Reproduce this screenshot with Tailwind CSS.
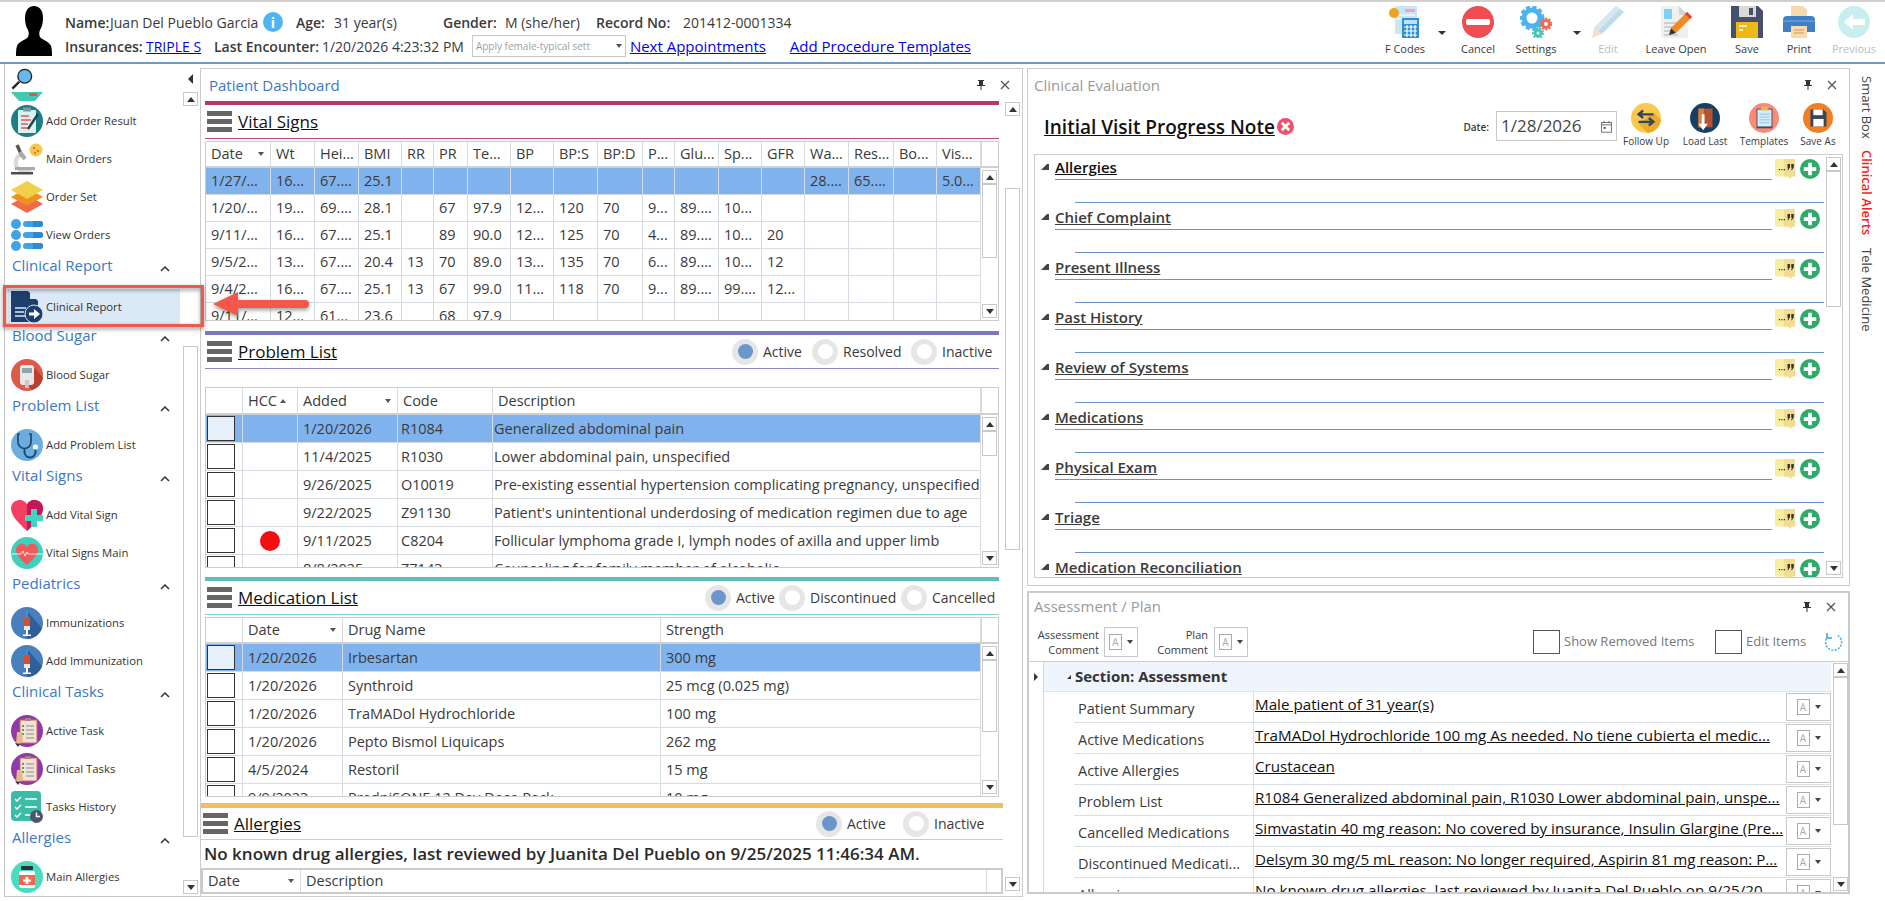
<!DOCTYPE html>
<html lang="en">
<head>
<meta charset="UTF-8" />
<title>Clinical Evaluation</title>
<script src="https://cdn.jsdelivr.net/npm/@tailwindcss/browser@4"></script>
</head>
<body class="relative w-[1885px] h-[901px] overflow-hidden bg-white text-[14px] text-[#3a3a3a] font-['Open_Sans',sans-serif]">

<header class="h-[64px] border-t-2 border-b-2 border-t-[#d0d0d0] border-b-[#7098c8] flex">
  <svg class="ml-[16px] mt-[4px] w-[36px] h-[50px] shrink-0" viewBox="0 0 36 50"><path fill="#000" d="M18 0c6 0 9 5 9 12 0 5-1 9-3 12-1 2-1 5 0 7 2 3 9 4 11 9 1 3 1 6 1 10H0c0-4 0-7 1-10 2-5 9-6 11-9 1-2 1-5 0-7-2-3-3-7-3-12C9 5 12 0 18 0z"/></svg>
  <div class="ml-[13px] w-[906px] shrink-0">
    <div class="flex items-center h-[24px] mt-[8px] whitespace-nowrap">
      <span class="w-[45px] font-semibold">Name:</span><span class="w-[153px]">Juan Del Pueblo Garcia</span>
      <span class="w-[33px]"><span class="flex items-center justify-center w-[20px] h-[20px] rounded-full bg-[#4db6f0] text-white font-bold text-[14px]">i</span></span>
      <span class="w-[38px] font-semibold">Age:</span><span class="w-[109px]">31 year(s)</span>
      <span class="w-[62px] font-semibold">Gender:</span><span class="w-[91px]">M (she/her)</span>
      <span class="w-[87px] font-semibold">Record No:</span><span>201412-0001334</span>
    </div>
    <div class="flex items-center h-[24px] whitespace-nowrap">
      <span class="w-[81px] font-semibold">Insurances:</span><a class="w-[68px] text-[#0000ee] underline">TRIPLE S</a>
      <span class="w-[108px] font-semibold">Last Encounter:</span><span class="w-[150px]">1/20/2026 4:23:32 PM</span>
      <span class="w-[154px] h-[22px] flex items-center border border-[#c8c8c8] pl-[3px] text-[10px] text-[#a0a0a0] overflow-hidden">Apply female-typical sett<span class="ml-auto mr-[3px] border-x-[3px] border-x-transparent border-t-[4px] border-t-[#555]"></span></span>
      <a class="ml-[4px] w-[160px] text-[#0000ee] underline text-[15px]">Next Appointments</a>
      <a class="text-[#0000ee] underline text-[15px]">Add Procedure Templates</a>
    </div>
  </div>
  <div id="toolbar" class="ml-auto mr-[6px] flex"></div>
</header>

<main class="flex h-[835px]">
  <aside class="ml-[4px] w-[196px] h-[833px] border-l border-b border-[#c8c8c8] flex shrink-0">
    <div id="sidebar" class="w-[178px] h-full overflow-hidden"></div>
    <div class="w-[17px] flex flex-col items-start">
      <div class="h-[28px] pl-[5px] pt-[10px]"><span class="block border-y-[5px] border-y-transparent border-r-[5px] border-r-[#333]"></span></div>
      <div id="sideUp"></div>
      <div class="mt-[240px] w-[15px] h-[491px] border border-[#c8c8c8]"></div>
      <div id="sideDown" class="mt-[43px]"></div>
    </div>
  </aside>

  <section class="mt-[4px] w-[823px] h-[829px] border border-[#cccccc] shrink-0 overflow-hidden">
    <div id="midTitle" class="h-[32px] flex items-center pl-[8px] text-[15px] text-[#3b78c4]">Patient Dashboard</div>
    <div class="flex">
      <div class="w-[804px] shrink-0">
        <div id="vitals"></div>
        <div id="problems" class="mt-[10px]"></div>
        <div id="meds" class="mt-[9px]"></div>
        <div id="allergies" class="mt-[6px]"></div>
      </div>
      <div class="w-[15px] flex flex-col">
        <div id="midUp" class="mt-[1px]"></div>
        <div class="mt-[72px] w-[15px] h-[362px] border border-[#c8c8c8]"></div>
        <div id="midDown" class="mt-[327px]"></div>
      </div>
    </div>
  </section>

  <div class="ml-[4px] w-[823px] shrink-0 mt-[4px] flex flex-col">
    <section class="h-[518px] border border-[#cccccc] px-[6px] overflow-hidden">
      <div class="flex items-center h-[32px] text-[15px] text-[#9a9a9a]">Clinical Evaluation<span id="cePin" class="ml-auto mr-[6px] flex"></span></div>
      <div class="flex h-[53px] items-start">
        <span class="ml-[10px] mt-[13px] text-[19px] leading-[26px] font-semibold text-[#111] underline">Initial Visit Progress Note</span>
        <span id="xIcon" class="ml-[2px] mt-[17px]"></span>
        <span class="ml-auto mt-[19px] text-[10px] font-semibold">Date:</span>
        <div class="ml-[7px] mt-[10px] w-[121px] h-[30px] border border-[#c8c8c8] flex items-center pl-[4px] text-[17px] text-[#444]">1/28/2026<span id="calIcon" class="ml-auto mr-[3px] flex"></span></div>
        <div id="ceTools" class="flex mt-[2px]"></div>
      </div>
      <div class="h-[424px] border border-[#cccccc] flex overflow-hidden">
        <div id="sections" class="w-[791px] shrink-0"></div>
        <div id="ceBar" class="h-full"></div>
      </div>
    </section>

    <section class="mt-[5px] h-[303px] border-2 border-[#cccccc] overflow-hidden">
      <div class="flex items-center h-[30px] pl-[5px] pb-[3px] text-[15px] text-[#9a9a9a]">Assessment / Plan<span id="apPin" class="ml-auto mr-[12px] flex"></span></div>
      <div class="flex h-[38px] items-center">
        <span class="w-[70px] text-right leading-[15px] text-[11px]">Assessment<br>Comment</span>
        <span id="combo1" class="ml-[5px]"></span>
        <span class="w-[70px] text-right leading-[15px] text-[11px]">Plan<br>Comment</span>
        <span id="combo2" class="ml-[6px]"></span>
        <span class="ml-[285px] w-[27px] h-[24px] border border-[#555]"></span>
        <span class="ml-[4px] w-[151px] text-[13px] text-[#777]">Show Removed Items</span>
        <span class="w-[27px] h-[24px] border border-[#555]"></span>
        <span class="ml-[4px] w-[78px] text-[13px] text-[#777]">Edit Items</span>
        <svg class="w-[20px] h-[20px]" viewBox="0 0 20 20" fill="none" stroke="#36a3e8" stroke-width="1.4"><path stroke-dasharray="2 1.4" d="M14 3.5A8 8 0 1 1 3.5 5"/><path stroke-width="1.6" d="M3 1 3 6 8 6"/></svg>
      </div>
      <div class="border-t border-[#cccccc] h-[231px] flex">
        <div class="w-[15px] shrink-0 border-r border-[#d8d8d8] pt-[11px] pl-[5px]"><span class="block border-y-[4px] border-y-transparent border-l-[4px] border-l-[#333]"></span></div>
        <div id="apRows" class="w-[787px] shrink-0 overflow-hidden"></div>
        <div id="apBar" class="pl-[2px] pt-[1px]"></div>
      </div>
    </section>
  </div>

  <div class="w-[35px] shrink-0 flex flex-col items-center pt-[12px] pr-[3px] text-[13px] text-[#444]">
    <span class="h-[62px] [writing-mode:vertical-rl] whitespace-nowrap">Smart Box</span>
    <span class="mt-[12px] h-[86px] [writing-mode:vertical-rl] whitespace-nowrap font-semibold text-[#f01e1e]">Clinical Alerts</span>
    <span class="mt-[12px] h-[84px] [writing-mode:vertical-rl] whitespace-nowrap">Tele Medicine</span>
  </div>
</main>

<!-- callout drawn on top of the screenshot -->
<div class="absolute left-[3px] top-[285px] w-[201px] h-[42px] border-[3px] border-[#f4584a] drop-shadow-[0_2px_2px_rgba(0,0,0,0.45)]"></div>
<svg class="absolute left-[208px] top-[288px] w-[104px] h-[32px] drop-shadow-[0_2px_2px_rgba(0,0,0,0.4)]" viewBox="0 0 104 32"><path fill="#f4584a" d="M5 16 30 4v8h67a4 4 0 0 1 0 8H30v8z"/></svg>

<script>
const up = `<span class="block border-x-[4px] border-x-transparent border-b-[5px] border-b-[#333]"></span>`
const down = `<span class="block border-x-[4px] border-x-transparent border-t-[5px] border-t-[#333]"></span>`
const sbBtn = (a) => `<div class="w-[15px] h-[14px] border border-[#c8c8c8] bg-white flex items-center justify-center">${a}</div>`
const pin = `<svg class="w-[8px] h-[10px]" viewBox="0 0 8 10"><path fill="#333" d="M1 0h6v1H6v4h2v1H4.5v4h-1V6H0V5h2V1H1z"/></svg>`
const close = `<svg class="ml-[15px] w-[10px] h-[10px]" viewBox="0 0 10 10" stroke="#555" stroke-width="1.3"><path d="M1 1l8 8M9 1l-8 8"/></svg>`
const pins = `<span class="flex items-center">${pin}${close}</span>`

const svg = (w, body) => `<svg class="block" width="${w}" height="${w}" viewBox="0 0 32 32">${body}</svg>`

const icons = {
  orderResult: `<circle cx="16" cy="16" r="16" fill="#1d7f85"/><rect x="7" y="5" width="18" height="23" rx="1" fill="#d9f2ec"/><rect x="12" y="2.5" width="8" height="4" fill="#7c9aa0"/><path d="M10 11h8M10 15h10M10 19h7M10 23h9" stroke="#e0566c" stroke-width="1.4"/><path d="M27 9 17 24" stroke="#24424f" stroke-width="2.4"/>`,
  mainOrders: `<path d="M9 12a9 9 0 1 0 12 13" fill="none" stroke="#d8d8d8" stroke-width="4"/><path d="M6 2l5 11" stroke="#555" stroke-width="3.4"/><path d="M9 9l5 7" stroke="#aaa" stroke-width="4"/><rect x="4" y="24" width="20" height="3" fill="#aaa"/><rect y="29" width="22" height="2.5" fill="#4c4c4c"/><circle cx="25" cy="7" r="6.5" fill="#f5c84c"/><circle cx="23" cy="5" r="1" fill="#d8562e"/><circle cx="27" cy="8" r="1" fill="#d8562e"/><circle cx="24" cy="10" r=".9" fill="#d8562e"/>`,
  orderSet: `<path fill="#ee6a4a" d="M16 14l16 9-16 9-16-9z"/><path fill="#f0901e" d="M16 7l16 9-16 9-16-9z"/><path fill="#f0cf4a" d="M16 0l16 9-16 9L0 9z"/>`,
  viewOrders: `<g fill="#3fa3e8"><circle cx="5" cy="5" r="5"/><circle cx="5" cy="16" r="5"/><circle cx="5" cy="27" r="5"/><rect x="12" y="2" width="20" height="6" rx="3"/><rect x="12" y="13" width="20" height="6" rx="3"/><rect x="12" y="24" width="20" height="6" rx="3"/></g><g fill="#2f88d4"><path d="M22 2h7a3 3 0 0 1 0 6h-7zM22 13h7a3 3 0 0 1 0 6h-7zM22 24h7a3 3 0 0 1 0 6h-7z"/></g>`,
  clinicalReport: `<path fill="#1c3f6e" d="M0 0h17l10 10v21H0z"/><path fill="#dbe8f6" d="M19 0l8 8h-8z"/><path stroke="#dbe8f6" stroke-width="1.4" d="M4 17h11M4 21h9M4 25h10"/><circle cx="23" cy="23" r="9" fill="#1c3f6e" stroke="#dbe8f6"/><path fill="#fff" d="M18 21.500h5V18l6 5-6 5v-3.500h-5z"/>`,
  bloodSugar: `<circle cx="16" cy="16" r="16" fill="#dd5a48"/><path fill="#b9402f" d="M24 9l8 10a16 16 0 0 1-11 12l-6-6z"/><rect x="9" y="6" width="14" height="20" rx="3" fill="#e8e8e8"/><rect x="11" y="9" width="10" height="5" fill="#8fa6ad"/><rect x="14" y="21" width="4" height="8" fill="#c9c9c9"/>`,
  problem: `<circle cx="16" cy="16" r="16" fill="#6aaee0"/><path d="M9 5H7v8a6.500 6.500 0 0 0 13 0V5h-2" fill="none" stroke="#24476b" stroke-width="1.7"/><path d="M13.500 20v3a5.500 5.500 0 0 0 11 0v-3" fill="none" stroke="#24476b" stroke-width="2"/><circle cx="24.500" cy="18" r="2.600" fill="#fff"/>`,
  addVital: `<path fill="#f43f62" d="M16 32C4 21 0 15 0 9a8.500 8.500 0 0 1 16-3.500A8.500 8.500 0 0 1 32 9c0 6-4 12-16 23z"/><path fill="#c2185b" d="M16 5.500A8.500 8.500 0 0 1 32 9c0 6-4 12-16 23z"/><path fill="#3ed6c0" d="M20 10h6v6h6v6h-6v6h-6v-6h-6v-6h6z"/>`,
  vitalMain: `<circle cx="16" cy="16" r="16" fill="#3fd0c0"/><path fill="#ef5a5a" d="M16 28C8 21 5 17 5 12.500a5.700 5.700 0 0 1 11-2 5.700 5.700 0 0 1 11 2C27 17 24 21 16 28z"/><path d="M0 17h10l2-3 2 5 2-4 1 2h15" fill="none" stroke="#fff" stroke-width=".8"/>`,
  syringe: `<circle cx="16" cy="16" r="16" fill="#4a7fbe"/><path fill="#2f5f96" d="M16 4l15 17a16 16 0 0 1-15 11z"/><rect x="15" y="4" width="2" height="6" fill="#3f92dc"/><rect x="13" y="10" width="6" height="9" fill="#d2502e"/><rect x="13" y="19" width="6" height="4" fill="#e8e8e8"/><rect x="15" y="23" width="2" height="5" fill="#fff"/><rect x="12" y="27.500" width="8" height="1.500" fill="#fff"/>`,
  task: `<circle cx="16" cy="16" r="16" fill="#8e3ba8"/><rect x="9" y="5" width="17" height="23" fill="#f0e4d8" stroke="#d9604a"/><rect x="14" y="3" width="6" height="3" fill="#b08080"/><path d="M15 11h8M15 15h8M15 19h8M15 23h8" stroke="#8a8a8a"/><path d="M11 10h2v2h-2zM11 14h2v2h-2zM11 18h2v2h-2z" fill="#49a070"/><path fill="#e8b88a" d="M6 17h5l1 9-4 3H5z"/><path fill="#333" d="M4 28l5 1-2 3z"/>`,
  tasksHist: `<rect width="30" height="30" rx="4" fill="#3cbba6"/><path d="M4 8l2 2 4-4M4 16l2 2 4-4M4 24l2 2 4-4" fill="none" stroke="#fff" stroke-width="1.4"/><path d="M14 8h12M14 16h12M14 24h6" stroke="#fff" stroke-width="1.4"/><circle cx="25.500" cy="25.500" r="6.500" fill="#4a5570"/><path d="M25.500 21.500v4h3.500" fill="none" stroke="#fff" stroke-width="1.400"/>`,
  allergy: `<circle cx="16" cy="16" r="16" fill="#4bdcc0"/><rect x="10" y="5" width="12" height="4" rx="1" fill="#333"/><rect x="8" y="10" width="16" height="17" rx="2" fill="#fff"/><rect x="8" y="14" width="16" height="10" fill="#f2674f"/><path d="M14.500 16h3v2.500H20v2h-2.500V23h-3v-2.500H12v-2h2.500z" fill="#fff"/>`,
  bowl: `<path fill="#41c9b4" d="M0 0h32L24 9H8z"/><rect x="18" y="1" width="8" height="3" fill="#e0564a"/>`,
  lens: `<circle cx="20" cy="12" r="10" fill="#6ab7ec" stroke="#222" stroke-width="2"/><path d="M12 20 2 30" stroke="#222" stroke-width="3.500"/>`,

  fcodes: `<rect x="6" width="22" height="28" fill="#c9e6f7"/><path d="M16 3h10v3H16z" fill="#f2a3c0"/><path d="M8 9h18M8 13h18" stroke="#fff"/><rect x="13" y="12" width="17" height="20" fill="#2f8fcf"/><rect x="15" y="14" width="13" height="4" fill="#bfe3f6"/><path d="M15 21h13M15 25h13M15 29h13M18 19v12M22 19v12M26 19v12" stroke="#fff" stroke-width="1.200"/><circle cx="5" cy="7" r="5" fill="#f0a020"/>`,
  cancel: `<circle cx="16" cy="16" r="16" fill="#ee4d52"/><rect x="4" y="13" width="24" height="6" rx="2" fill="#fff"/>`,
  settings: `<g fill="none"><circle cx="12" cy="12" r="8" stroke="#4fb3ee" stroke-width="5"/><circle cx="12" cy="12" r="11" stroke="#4fb3ee" stroke-width="3" stroke-dasharray="4 2.500"/><circle cx="26" cy="18" r="3.500" stroke="#ef6a52" stroke-width="3"/><circle cx="26" cy="18" r="5.500" stroke="#ef6a52" stroke-width="2" stroke-dasharray="2 1.500"/><circle cx="18" cy="27" r="3" stroke="#40c9b0" stroke-width="3"/><circle cx="18" cy="27" r="5" stroke="#40c9b0" stroke-width="2" stroke-dasharray="2 1.500"/></g>`,
  edit: `<path fill="#bcdcea" d="M24 0l8 6L10 28 2 22z"/><path fill="#f5ddd5" d="M2 22l8 6-10 4z"/><path fill="#d5e8f0" d="M24 0l4 3L6 25l-4-3z"/>`,
  leaveOpen: `<path fill="#f0f0f0" d="M1 0h18l9 9v23H1z"/><path fill="#d4d4d4" d="M19 0l9 9h-9z"/><rect x="4" y="3" width="8" height="10" fill="#7fd0f5"/><path d="M4 17h14M4 21h11M4 25h9M4 29h14" stroke="#b0b0b0" stroke-width="1.200"/><path fill="#f08a22" d="M27 6l5 5-16 16-5-5z"/><path fill="#d8453a" d="M27 6l5 5-2 2-5-5z"/><path fill="#333" d="M11 22l5 5-7 2z"/>`,
  save: `<path fill="#46506a" d="M0 0h27l5 5v27H0z"/><rect x="8" width="17" height="11" fill="#d9d9d9"/><rect x="18" y="2" width="4" height="7" fill="#46506a"/><rect x="5" y="16" width="22" height="16" fill="#eeb917"/><path d="M8 20h8M8 24h4" stroke="#fff" stroke-width="1.500"/>`,
  print: `<path fill="#f7d9ac" d="M8 0h12l4 4v8H8z"/><path fill="#3f7fc4" d="M4 10h24a4 4 0 0 1 4 4v12H0V14a4 4 0 0 1 4-4z"/><rect x="0" y="14" width="32" height="2" fill="#5d97d6"/><rect x="8" y="20" width="16" height="12" fill="#f7d9ac"/><path d="M11 24h10M11 27h10" stroke="#c9986a"/>`,
  previous: `<circle cx="16" cy="16" r="16" fill="#c9eef0"/><path fill="#fff" d="M6 16l9-8v5h12v6H15v5z"/>`,

  followUp: `<circle cx="16" cy="16" r="16" fill="#f9c84c"/><path fill="#e8ac2c" d="M24 10l8 8a16 16 0 0 1-14 14l-10-10z"/><path d="M9 12h15M13 8l-5 4 5 4M23 20H8M19 16l5 4-5 4" fill="none" stroke="#35465c" stroke-width="2.400"/>`,
  loadLast: `<circle cx="16" cy="16" r="16" fill="#173f63"/><rect x="9" y="6" width="15" height="20" fill="#b5532e"/><rect x="9" y="6" width="6" height="20" fill="#d8803a"/><path d="M14 12v12" stroke="#fff" stroke-width="3"/><path fill="#fff" d="M9 22h10l-5 7z"/>`,
  templates: `<circle cx="16" cy="16" r="16" fill="#f98a76"/><rect x="8" y="6" width="17" height="21" fill="#3a4f66"/><rect x="9" y="7" width="15" height="18" fill="#d4ebf8"/><rect x="13" y="4" width="7" height="4" fill="#f2b94a"/><path d="M11 12h11M11 15h11M11 18h11M11 21h11" stroke="#8fc6e8"/>`,
  saveAs: `<circle cx="16" cy="16" r="16" fill="#ef7f22"/><path fill="#35465c" d="M8 7h14l3 3v15H8z"/><rect x="11" y="7" width="10" height="6" fill="#fff"/><rect x="11" y="17" width="11" height="8" fill="#fff"/>`,
  plus: `<circle cx="16" cy="16" r="16" fill="#2eaa6a"/><path fill="#fff" d="M13 6h6v7h7v6h-7v7h-6v-7H6v-6h7z"/>`,
  redX: `<circle cx="16" cy="16" r="16" fill="#f0506e"/><path stroke="#fff" stroke-width="5" d="M9 9l14 14M23 9L9 23"/>`,
  quote: `<path fill="#f8eea0" d="M0 0h32v28h-6v4l-5-4H0z"/><path fill="#f2dc94" d="M14 0h18v28h-6v4l-5-4h-7z"/><path fill="#333" d="M20 8h4v5l-3 5h-1l1-4h-1zM26 8h4v5l-3 5h-1l1-4h-1z"/><path fill="#333" d="M6 16h2v2H6zM10 16h2v2h-2zM14 16h2v2h-2z"/>`,
  cal: `<rect x="4" y="6" width="24" height="24" fill="none" stroke="#555" stroke-width="2"/><path d="M4 12h24M10 2v6M22 2v6" stroke="#555" stroke-width="2"/><rect x="9" y="17" width="5" height="5" fill="#555"/>`
}

document.getElementById('xIcon').innerHTML = svg(17, icons.redX)
document.getElementById('calIcon').innerHTML = svg(13, icons.cal)
document.getElementById('midTitle').insertAdjacentHTML('beforeend', `<span class="ml-auto mr-[12px] flex">${pins}</span>`)
document.getElementById('cePin').innerHTML = pins
document.getElementById('apPin').innerHTML = pins
document.getElementById('sideUp').innerHTML = sbBtn(up)
document.getElementById('sideDown').innerHTML = sbBtn(down)
document.getElementById('midUp').innerHTML = sbBtn(up)
document.getElementById('midDown').innerHTML = sbBtn(down)

// toolbar
const tools = [
  ['F Codes', 'fcodes', 'w-[60px]', ''],
  [null, null, 'w-[14px]', ''],
  ['Cancel', 'cancel', 'w-[58px]', ''],
  ['Settings', 'settings', 'w-[58px]', ''],
  [null, null, 'w-[24px]', ''],
  ['Edit', 'edit', 'w-[38px]', 'text-[#bdbdbd]'],
  ['Leave Open', 'leaveOpen', 'w-[98px]', ''],
  ['Save', 'save', 'w-[44px]', ''],
  ['Print', 'print', 'w-[60px]', ''],
  ['Previous', 'previous', 'w-[50px]', 'text-[#bdbdbd]'],
]
document.getElementById('toolbar').innerHTML = tools.map(([label, icon, w, color]) => {
  if (!label) return `<div class="${w} flex justify-center pt-[29px]"><span class="block h-0 border-x-[4px] border-x-transparent border-t-[4px] border-t-[#333]"></span></div>`
  return `<div class="${w} flex flex-col items-center pt-[4px] whitespace-nowrap">${svg(32, icons[icon])}<span class="mt-[3px] text-[11px] leading-[15px] ${color}">${label}</span></div>`
}).join('')

// clinical evaluation tools
const ceTools = [['Follow Up', 'followUp', 'w-[58px]'], ['Load Last', 'loadLast', 'w-[60px]'], ['Templates', 'templates', 'w-[58px]'], ['Save As', 'saveAs', 'w-[50px]']]
document.getElementById('ceTools').innerHTML = ceTools.map(([l, i, w]) =>
  `<div class="${w} flex flex-col items-center whitespace-nowrap">${svg(30, icons[i])}<span class="text-[10px] leading-[15px] mt-[1px]">${l}</span></div>`).join('')

// sidebar
const side = [
  ['i', 'Add Order Result', 'orderResult'], ['i', 'Main Orders', 'mainOrders'], ['i', 'Order Set', 'orderSet'], ['i', 'View Orders', 'viewOrders'],
  ['g', 'Clinical Report'], ['s', 'Clinical Report', 'clinicalReport'],
  ['g', 'Blood Sugar'], ['i', 'Blood Sugar', 'bloodSugar'],
  ['g', 'Problem List'], ['i', 'Add Problem List', 'problem'],
  ['g', 'Vital Signs'], ['i', 'Add Vital Sign', 'addVital'], ['i', 'Vital Signs Main', 'vitalMain'],
  ['g', 'Pediatrics'], ['i', 'Immunizations', 'syringe'], ['i', 'Add Immunization', 'syringe'],
  ['g', 'Clinical Tasks'], ['i', 'Active Task', 'task'], ['i', 'Clinical Tasks', 'task'], ['i', 'Tasks History', 'tasksHist'],
  ['g', 'Allergies'], ['i', 'Main Allergies', 'allergy'],
]
const sideTop = `<div class="h-[41px] pl-[6px] pt-[4px] flex flex-col"><svg class="w-[22px] h-[22px]" viewBox="0 0 32 32">${icons.lens}</svg><svg class="mt-[2px] w-[32px] h-[9px]" viewBox="0 0 32 9">${icons.bowl}</svg></div>`
document.getElementById('sidebar').innerHTML = sideTop + side.map(([k, label, icon]) => {
  if (k === 'g') return `<div class="h-[32px] pl-[7px] relative text-[15px] leading-[16px] text-[#3b78c4]">${label}<svg class="absolute left-[155px] top-[9px] w-[10px] h-[6px]" viewBox="0 0 10 6" fill="none" stroke="#333" stroke-width="1.5"><path d="M1 5l4-4 4 4"/></svg></div>`
  const bg = k === 's' ? 'bg-[#dbe8f6] w-[172px] ml-[3px] pl-[3px] h-[36px]' : 'pl-[6px] h-[32px]'
  return `<div class="h-[38px]"><div class="flex items-center ${bg}"><span class="w-[32px] shrink-0">${svg(32, icons[icon])}</span><span class="ml-[3px] text-[11.3px] text-[#333] whitespace-nowrap">${label}</span></div></div>`
}).join('')

// dashboard sections
const burger = `<span class="w-[25px] h-[21px] flex flex-col justify-between shrink-0"><i class="block h-[5px] bg-[#666]"></i><i class="block h-[5px] bg-[#666]"></i><i class="block h-[5px] bg-[#666]"></i></span>`
const radio = (label, on, w) => `<span class="${w} flex items-center"><span class="w-[26px] h-[26px] shrink-0 rounded-full bg-[#e6e6e6] flex items-center justify-center"><span class="w-[15px] h-[15px] rounded-full ${on ? 'bg-[#6b95cb]' : 'bg-white'}"></span></span><span class="ml-[5px]">${label}</span></span>`

function head(bar, line, title, radios, rowH, box, pad) {
  return `<div class="${box} ${bar}"></div>
  <div class="${rowH} ${box} ${pad} flex items-center">${burger}<span class="ml-[6px] text-[17px] text-[#111] underline">${title}</span><span class="ml-auto flex">${radios}</span></div>
  <div class="h-[1px] ${box} ${line}"></div>`
}

const cellBase = 'overflow-hidden whitespace-nowrap flex items-center border-r border-[#d6dbe2]'

function table(opts) {
  const hdr = opts.head.map((h, j) => `<div class="${cellBase} pl-[5px] h-full">${h}</div>`).join('')
  const rows = opts.rows.map((r, i) => {
    const sel = i === 0
    const cells = r.map((c, j) => {
      if (opts.check && j === 0) return `<div class="${cellBase} pl-[1px]"><span class="block w-[28px] h-[25px] border border-[#333] ${sel ? 'bg-[#e6f0fb]' : 'bg-white'}"></span></div>`
      if (c === '@dot') return `<div class="${cellBase} justify-center"><span class="block w-[20px] h-[20px] rounded-full bg-[#f01010]"></span></div>`
      const pad = opts.pads ? opts.pads[j] : 'pl-[5px]'
      return `<div class="${cellBase} ${pad}">${c}</div>`
    }).join('')
    return `<div class="grid ${opts.cols} ${opts.rowH} border-b border-[#d6dbe2] ${sel ? 'bg-[#80b3ee]' : ''}">${cells}</div>`
  }).join('')
  return `<div class="${opts.box} border border-[#cccccc] overflow-hidden flex flex-col text-[14.5px]">
    <div class="flex ${opts.headH} shrink-0 border-b-2 border-[#d0d0d0]"><div class="w-[775px] grid ${opts.cols}">${hdr}</div><div class="border-l border-[#d6dbe2]"></div></div>
    <div class="flex flex-1 min-h-0">
      <div class="w-[775px] overflow-hidden shrink-0">${rows}</div>
      <div class="flex flex-col pl-[1px] pt-[2px] pb-[2px]">${sbBtn(up)}<div class="w-[15px] ${opts.thumb} border border-[#c8c8c8]"></div><div class="flex-1"></div>${sbBtn(down)}</div>
    </div>
  </div>`
}

const sortDown = `<span class="ml-auto mr-[6px] border-x-[3px] border-x-transparent border-t-[4px] border-t-[#555]"></span>`
const sortUp = `<span class="ml-[3px] border-x-[3px] border-x-transparent border-b-[4px] border-b-[#555]"></span>`

document.getElementById('vitals').innerHTML = head('h-[4px] bg-[#b8395f]', 'bg-[#c04a70]', 'Vital Signs', '', 'h-[33px]', 'ml-[4px] w-[794px]', 'pl-[2px]') +
  `<div class="ml-[4px] mt-[2px] w-[794px]">` + table({
    box: 'h-[180px]', headH: 'h-[26px]', rowH: 'h-[27px]', thumb: 'h-[74px]',
    cols: 'grid-cols-[65px_44px_44px_43px_32px_34px_43px_43px_44px_45px_32px_44px_43px_43px_44px_45px_43px_44px]',
    head: [`Date${sortDown}`, 'Wt', 'Hei...', 'BMI', 'RR', 'PR', 'Te...', 'BP', 'BP:S', 'BP:D', 'P...', 'Glu...', 'Sp...', 'GFR', 'Wa...', 'Res...', 'Bo...', 'Vis...'],
    rows: [
      ['1/27/...', '16...', '67....', '25.1', '', '', '', '', '', '', '', '', '', '', '28....', '65....', '', '5.0...'],
      ['1/20/...', '19...', '69....', '28.1', '', '67', '97.9', '12...', '120', '70', '9...', '89....', '10...', '', '', '', '', ''],
      ['9/11/...', '16...', '67....', '25.1', '', '89', '90.0', '12...', '125', '70', '4...', '89....', '10...', '20', '', '', '', ''],
      ['9/5/2...', '13...', '67....', '20.4', '13', '70', '89.0', '13...', '135', '70', '6...', '89....', '10...', '12', '', '', '', ''],
      ['9/4/2...', '16...', '67....', '25.1', '13', '67', '99.0', '11...', '118', '70', '9...', '89....', '99....', '12...', '', '', '', ''],
      ['9/11/...', '12...', '61...', '23.6', '', '68', '97.9', '', '', '', '', '', '', '', '', '', '', ''],
    ],
  }) + `</div>`

document.getElementById('problems').innerHTML = head('h-[4px] bg-[#7b78c0]', 'bg-[#8a86cc]', 'Problem List',
  radio('Active', true, 'w-[80px]') + radio('Resolved', false, 'w-[99px]') + radio('Inactive', false, 'w-[88px]'), 'h-[33px]', 'ml-[4px] w-[794px]', 'pl-[2px]') +
  `<div class="ml-[4px] mt-[18px] w-[794px]">` + table({
    box: 'h-[181px]', headH: 'h-[27px]', rowH: 'h-[28px]', thumb: 'h-[25px]', check: true,
    cols: 'grid-cols-[37px_55px_100px_95px_488px]',
    pads: ['', '', 'pl-[5px]', 'pl-[3px]', 'pl-[1px]'],
    head: ['', `HCC${sortUp}`, `Added${sortDown}`, 'Code', 'Description'],
    rows: [
      ['', '', '1/20/2026', 'R1084', 'Generalized abdominal pain'],
      ['', '', '11/4/2025', 'R1030', 'Lower abdominal pain, unspecified'],
      ['', '', '9/26/2025', 'O10019', 'Pre-existing essential hypertension complicating pregnancy, unspecified'],
      ['', '', '9/22/2025', 'Z91130', "Patient's unintentional underdosing of medication regimen due to age"],
      ['', '@dot', '9/11/2025', 'C8204', 'Follicular lymphoma grade I, lymph nodes of axilla and upper limb'],
      ['', '', '8/8/2025', 'Z7143', 'Counseling for family member of alcoholic'],
    ],
  }) + `</div>`

document.getElementById('meds').innerHTML = head('h-[4px] bg-[#5fbdbb]', 'bg-[#7fcfcf]', 'Medication List',
  radio('Active', true, 'w-[74px]') + radio('Discontinued', false, 'w-[122px]') + radio('Cancelled', false, 'w-[98px]'), 'h-[33px]', 'ml-[4px] w-[794px]', 'pl-[2px]') +
  `<div class="ml-[4px] mt-[2px] w-[794px]">` + table({
    box: 'h-[180px]', headH: 'h-[26px]', rowH: 'h-[28px]', thumb: 'h-[72px]', check: true,
    cols: 'grid-cols-[37px_100px_318px_320px]',
    head: ['', `Date${sortDown}`, 'Drug Name', 'Strength'],
    rows: [
      ['', '1/20/2026', 'Irbesartan', '300 mg'],
      ['', '1/20/2026', 'Synthroid', '25 mcg (0.025 mg)'],
      ['', '1/20/2026', 'TraMADol Hydrochloride', '100 mg'],
      ['', '1/20/2026', 'Pepto Bismol Liquicaps', '262 mg'],
      ['', '4/5/2024', 'Restoril', '15 mg'],
      ['', '9/9/2023', 'PredniSONE 12 Day Dose Pack', '10 mg'],
    ],
  }) + `</div>`

document.getElementById('allergies').innerHTML = head('h-[5px] bg-[#f0c060]', 'bg-[#f3c877]', 'Allergies',
  radio('Active', true, 'w-[87px]') + radio('Inactive', false, 'w-[100px]'), 'h-[31px]', 'w-[802px]', 'pl-[2px]') +
  `<div class="ml-[3px] h-[28px] flex items-center text-[17px] font-semibold text-[#2a2a2a] whitespace-nowrap">No known drug allergies, last reviewed by Juanita Del Pueblo on 9/25/2025 11:46:34 AM.</div>
  <div class="w-[802px] h-[26px] border-2 border-[#cccccc] grid grid-cols-[98px_686px_1fr] text-[14.5px]">
    <div class="${cellBase} pl-[5px]">Date${sortDown}</div><div class="${cellBase} pl-[5px]">Description</div><div></div>
  </div>`

// clinical evaluation sections
const sectionNames = ['Allergies', 'Chief Complaint', 'Present Illness', 'Past History', 'Review of Systems', 'Medications', 'Physical Exam', 'Triage', 'Medication Reconciliation']
document.getElementById('sections').innerHTML = sectionNames.map((s, i) => `
  <div class="h-[50px] pl-[6px]">
    <div class="flex h-[25px] w-[784px]">
      <span class="mt-[9px] w-[8px] h-0 border-l-[6px] border-l-transparent border-b-[6px] border-b-[#444] shrink-0"></span>
      <div class="ml-[6px] w-[717px] h-[25px] border-b border-[#6a94c8] text-[15px] font-semibold leading-[25px] ${i === 0 ? 'text-[#111]' : 'text-[#3a3a3a]'}"><span class="underline">${s}</span></div>
      <div class="ml-[3px] mt-[4px] flex gap-[5px]">${svg(20, icons.quote)}${svg(20, icons.plus)}</div>
    </div>
    <div class="ml-[34px] mt-[22px] w-[749px] border-b border-[#6a94c8]"></div>
  </div>`).join('')
document.getElementById('ceBar').innerHTML = `<div class="flex flex-col h-[420px] pt-[2px]">${sbBtn(up)}<div class="w-[15px] h-[136px] border border-[#c8c8c8]"></div><div class="flex-1"></div>${sbBtn(down)}</div>`

// assessment rows
const combo = (cls) => `<span class="${cls} flex items-center justify-center gap-[5px] border border-[#c8c8c8] text-[#aaa]"><span class="block w-[13px] h-[16px] border border-[#aaa] text-[10px] leading-[14px] text-center">A</span><span class="block border-x-[3px] border-x-transparent border-t-[4px] border-t-[#444]"></span></span>`
document.getElementById('combo1').innerHTML = combo('w-[34px] h-[30px]')
document.getElementById('combo2').innerHTML = combo('w-[34px] h-[30px]')
const apRows = [
  ['Patient Summary', 'Male patient of 31 year(s)'],
  ['Active Medications', 'TraMADol Hydrochloride 100 mg As needed.  No tiene cubierta el medic...'],
  ['Active Allergies', 'Crustacean'],
  ['Problem List', 'R1084 Generalized abdominal pain, R1030 Lower abdominal pain, unspe...'],
  ['Cancelled Medications', 'Simvastatin 40 mg reason: No covered by insurance, Insulin Glargine (Pre...'],
  ['Discontinued Medicati...', 'Delsym 30 mg/5 mL reason: No longer required, Aspirin 81 mg reason: P...'],
  ['Allergies', 'No known drug allergies, last reviewed by Juanita Del Pueblo on 9/25/20...'],
]
document.getElementById('apRows').innerHTML = `<div class="h-[30px] flex items-center bg-[#eef5fc] border-b border-[#dfe5ea] pl-[23px] text-[15px] font-bold text-[#333]"><span class="mr-[4px] border-l-[4px] border-l-transparent border-b-[4px] border-b-[#333]"></span>Section: Assessment</div>` +
  apRows.map(([l, v]) => `<div class="ml-[30px] h-[31px] grid grid-cols-[180px_532px_45px] border-b border-[#d9dfe5]">
    <div class="pl-[4px] flex items-center whitespace-nowrap overflow-hidden border-r border-[#d9dfe5] pt-[3px] text-[14.5px]">${l}</div>
    <div class="pl-[1px] whitespace-nowrap overflow-hidden text-[#111] pt-[2px] leading-[20px] text-[15.2px]"><span class="underline">${v}</span></div>
    <div class="py-[1px]">${combo('w-[45px] h-[28px]')}</div>
  </div>`).join('')
document.getElementById('apBar').innerHTML = `<div class="flex flex-col h-[229px] pb-[1px]">${sbBtn(up)}<div class="w-[15px] h-[148px] border border-[#c8c8c8]"></div><div class="flex-1"></div>${sbBtn(down)}</div>`
</script>
</body>
</html>
